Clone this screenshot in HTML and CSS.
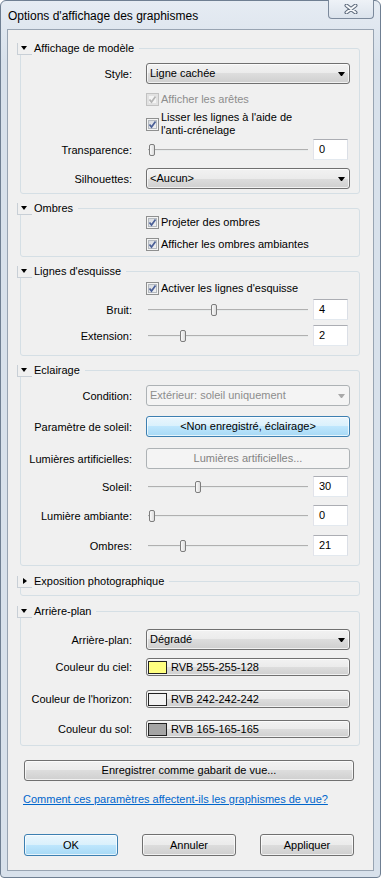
FILE: index.html
```html
<!DOCTYPE html>
<html lang="fr">
<head>
  <meta charset="UTF-8">
  <meta name="viewport" content="width=device-width, initial-scale=1.0">
  <title>Options d'affichage des graphismes</title>
  <link rel="stylesheet" href="styles.css">
</head>
<body>
  <div class="window">
    <div class="titlebar">
      <span class="title">Options d'affichage des graphismes</span>
      <span class="close">
        <svg width="14" height="10" viewBox="0 0 14 10">
          <path d="M2.5 1.5 L11.5 8.5 M11.5 1.5 L2.5 8.5" stroke="#5d6a7b" stroke-width="4" stroke-linecap="round"/>
          <path d="M2.5 1.5 L11.5 8.5 M11.5 1.5 L2.5 8.5" stroke="#f7f9fb" stroke-width="2" stroke-linecap="round"/>
        </svg>
      </span>
    </div>

    <div class="client">
      <!-- Affichage de modèle -->
      <fieldset class="group">
        <legend><span class="toggle"></span>Affichage de modèle</legend>
        <div class="row mt8">
          <label>Style:</label>
          <div class="combo">Ligne cachée</div>
        </div>
        <div class="row mt8">
          <span></span>
          <div class="check disabled"><span class="cb"><svg width="11" height="11" viewBox="0 0 11 11"><path d="M2.5 5.5 L4.5 8 L8.5 2.5"/></svg></span>Afficher les arêtes</div>
        </div>
        <div class="row mt5">
          <span></span>
          <div class="check two-lines"><span class="cb"><svg width="11" height="11" viewBox="0 0 11 11"><path d="M2.5 5.5 L4.5 8 L8.5 2.5"/></svg></span><span>Lisser les lignes à l'aide de<br>l'anti-crénelage</span></div>
        </div>
        <div class="row mt2">
          <label>Transparence:</label>
          <div class="slider-cell">
            <div class="slider"><span class="thumb" style="left: 1px"></span></div>
            <div class="num">0</div>
          </div>
        </div>
        <div class="row mt8 pb4">
          <label>Silhouettes:</label>
          <div class="combo">&lt;Aucun&gt;</div>
        </div>
      </fieldset>

      <!-- Ombres -->
      <fieldset class="group">
        <legend><span class="toggle"></span>Ombres</legend>
        <div class="row">
          <span></span>
          <div class="check"><span class="cb"><svg width="11" height="11" viewBox="0 0 11 11"><path d="M2.5 5.5 L4.5 8 L8.5 2.5"/></svg></span>Projeter des ombres</div>
        </div>
        <div class="row mt8 pb5">
          <span></span>
          <div class="check"><span class="cb"><svg width="11" height="11" viewBox="0 0 11 11"><path d="M2.5 5.5 L4.5 8 L8.5 2.5"/></svg></span>Afficher les ombres ambiantes</div>
        </div>
      </fieldset>

      <!-- Lignes d'esquisse -->
      <fieldset class="group">
        <legend><span class="toggle"></span>Lignes d'esquisse</legend>
        <div class="row mt3">
          <span></span>
          <div class="check"><span class="cb"><svg width="11" height="11" viewBox="0 0 11 11"><path d="M2.5 5.5 L4.5 8 L8.5 2.5"/></svg></span>Activer les lignes d'esquisse</div>
        </div>
        <div class="row mt4">
          <label>Bruit:</label>
          <div class="slider-cell">
            <div class="slider"><span class="thumb" style="left: 63px"></span></div>
            <div class="num">4</div>
          </div>
        </div>
        <div class="row mt5 pb9">
          <label>Extension:</label>
          <div class="slider-cell">
            <div class="slider"><span class="thumb" style="left: 32px"></span></div>
            <div class="num">2</div>
          </div>
        </div>
      </fieldset>

      <!-- Eclairage -->
      <fieldset class="group">
        <legend><span class="toggle"></span>Eclairage</legend>
        <div class="row mt8">
          <label>Condition:</label>
          <div class="combo disabled">Extérieur: soleil uniquement</div>
        </div>
        <div class="row mt10">
          <label>Paramètre de soleil:</label>
          <div class="btn blue">&lt;Non enregistré, éclairage&gt;</div>
        </div>
        <div class="row mt11">
          <label>Lumières artificielles:</label>
          <div class="btn disabled">Lumières artificielles...</div>
        </div>
        <div class="row mt7">
          <label>Soleil:</label>
          <div class="slider-cell">
            <div class="slider"><span class="thumb" style="left: 47px"></span></div>
            <div class="num">30</div>
          </div>
        </div>
        <div class="row mt8">
          <label>Lumière ambiante:</label>
          <div class="slider-cell">
            <div class="slider"><span class="thumb" style="left: 1px"></span></div>
            <div class="num">0</div>
          </div>
        </div>
        <div class="row mt9 pb9">
          <label>Ombres:</label>
          <div class="slider-cell">
            <div class="slider"><span class="thumb" style="left: 32px"></span></div>
            <div class="num">21</div>
          </div>
        </div>
      </fieldset>

      <!-- Exposition photographique -->
      <fieldset class="group collapsed">
        <legend><span class="toggle"></span>Exposition photographique</legend>
      </fieldset>

      <!-- Arrière-plan -->
      <fieldset class="group">
        <legend><span class="toggle"></span>Arrière-plan</legend>
        <div class="row mt11">
          <label>Arrière-plan:</label>
          <div class="combo">Dégradé</div>
        </div>
        <div class="row mt8">
          <label>Couleur du ciel:</label>
          <div class="btn color"><span class="swatch sky"></span>RVB 255-255-128</div>
        </div>
        <div class="row mt14">
          <label>Couleur de l'horizon:</label>
          <div class="btn color"><span class="swatch horizon"></span>RVB 242-242-242</div>
        </div>
        <div class="row mt12 pb7">
          <label>Couleur du sol:</label>
          <div class="btn color"><span class="swatch ground"></span>RVB 165-165-165</div>
        </div>
      </fieldset>

      <div class="btn wide">Enregistrer comme gabarit de vue...</div>
      <a class="help" href="#">Comment ces paramètres affectent-ils les graphismes de vue?</a>

      <div class="actions">
        <div class="btn blue">OK</div>
        <div class="btn">Annuler</div>
        <div class="btn">Appliquer</div>
      </div>
    </div>
  </div>
</body>
</html>
```

FILE: styles.css
```css
body { margin: 0; background: #fff; font-family: "Liberation Sans", Arial, sans-serif; font-size: 12px; color: #000; }

.window { width: 381px; height: 878px; box-sizing: border-box; display: flex; flex-direction: column; padding: 0 6px 6px; border: 1px solid #6f7f92; border-radius: 6px 6px 4px 4px; background: linear-gradient(#e6ecf3, #d8e1eb 60px, #d8e1eb); }
.titlebar { height: 28px; display: flex; justify-content: space-between; align-items: flex-start; }
.title { margin: 7px 0 0 1px; line-height: 16px; }
.close { width: 46px; height: 19px; box-sizing: border-box; margin-top: -1px; border: 1px solid #7c8a9c; border-top: 0; border-radius: 0 0 4px 4px; background: linear-gradient(#eef2f7, #dbe3ec); display: flex; align-items: center; justify-content: center; }

.client { flex: 1; border: 1px solid #98a4b2; background: #f0f0f0; padding-top: 11px; font-size: 11px; }

/* group boxes */
.group { margin: 0 13px 0 12px; padding: 0 9px 0 0; border: 1px solid #d5dfe5; border-radius: 3px; min-inline-size: 0; }
.group + .group { margin-top: 7px; }
.group.collapsed { padding-bottom: 7px; margin-top: 8px; }
.group.collapsed + .group { margin-top: 8px; }
.group legend { padding: 0 5px 0 0; margin-left: -4px; line-height: 14px; }
.toggle { display: inline-block; vertical-align: bottom; width: 14px; height: 11px; margin-right: 2px; border-left: 1px solid #c8cfd6; border-bottom: 1px solid #c8cfd6; }
.toggle::after { content: ""; display: block; width: 0; margin: 3px 0 0 3px; border-left: 3px solid transparent; border-right: 3px solid transparent; border-top: 4px solid #000; }
.collapsed .toggle::after { margin: 2px 0 0 5px; border: 3px solid transparent; border-right: 0; border-left: 4px solid #000; }

.row { display: grid; grid-template-columns: 111px 1fr; column-gap: 14px; align-items: center; }
.row label { text-align: right; white-space: nowrap; }
.mt2 { margin-top: 2px; } .mt3 { margin-top: 3px; } .mt4 { margin-top: 4px; } .mt5 { margin-top: 5px; }
.mt7 { margin-top: 7px; } .mt8 { margin-top: 8px; } .mt9 { margin-top: 9px; } .mt10 { margin-top: 10px; }
.mt11 { margin-top: 11px; } .mt12 { margin-top: 12px; } .mt14 { margin-top: 14px; }
.pb4 { padding-bottom: 4px; } .pb5 { padding-bottom: 5px; } .pb7 { padding-bottom: 7px; } .pb9 { padding-bottom: 9px; }

/* checkboxes */
.check { display: flex; align-items: center; gap: 2px; line-height: 14px; }
.check.two-lines { line-height: 13px; }
.cb { width: 13px; height: 13px; box-sizing: border-box; flex: none; border: 1px solid #8e8f8f; background: linear-gradient(135deg, #cfd3d9, #f8f8f8); box-shadow: inset 0 0 0 1px #f4f4f4, inset 0 0 0 2px #b5bac0; }
.cb svg { display: block; }
.cb path { fill: none; stroke: #4a5f97; stroke-width: 1.7; }
.check.disabled { color: #8d8d8d; }
.check.disabled .cb { border-color: #c2c2c2; background: #f4f4f4; box-shadow: inset 0 0 0 2px #e2e2e2; }
.check.disabled .cb path { stroke: #b4b4b4; }

/* combos and buttons */
.combo, .btn { height: 21px; box-sizing: border-box; border: 1px solid #707070; border-radius: 3px; line-height: 19px; white-space: nowrap; background: linear-gradient(#f2f2f2, #ebebeb 50%, #dddddd 50%, #cfcfcf); box-shadow: inset 0 0 0 1px rgba(255, 255, 255, 0.7); }
.combo { display: flex; justify-content: space-between; align-items: center; padding: 0 4px 0 3px; }
.combo::after { content: ""; width: 1px; height: 0; border-left: 3px solid transparent; border-right: 3px solid transparent; border-top: 4px solid #000; }
.combo.disabled { color: #8d8d8d; border-color: #adb2b5; background: #f4f4f4; box-shadow: none; }
.combo.disabled::after { border-top-color: #a8a8a8; }
.btn { text-align: center; }
.btn.blue { border-color: #3c7fb1; background: linear-gradient(#eaf6fd, #d9f0fc 50%, #bee6fd 50%, #a7d9f5); }
.btn.disabled { color: #838383; border-color: #adb2b5; background: #f4f4f4; box-shadow: none; }
.btn.color { height: 18px; display: flex; align-items: center; gap: 4px; padding-left: 1px; text-align: left; line-height: 16px; }
.swatch { width: 19px; height: 13px; box-sizing: border-box; border: 1px solid #222; }
.swatch.sky { background: #ffff80; }
.swatch.horizon { background: #f2f2f2; }
.swatch.ground { background: #a5a5a5; }

/* sliders */
.slider-cell { display: flex; align-items: center; gap: 5px; padding-right: 2px; }
.slider { flex: 1; position: relative; height: 2px; margin-left: 2px; background: #e7eaea; border-top: 1px solid #b0b0b0; box-sizing: border-box; }
.thumb { position: absolute; top: 50%; margin-top: -6px; width: 6px; height: 12px; box-sizing: border-box; border: 1px solid #7d7d7d; border-radius: 2px; background: linear-gradient(to right, #fafafa, #dcdcdc); }
.num { width: 35px; height: 21px; box-sizing: border-box; padding-left: 5px; line-height: 19px; background: #fff; border: 1px solid; border-color: #abadb3 #dbdfe6 #e3e9ef #e2e3ea; }

/* bottom area */
.btn.wide { margin: 14px 19px 0 16px; }
.help { display: block; margin: 11px 0 0 15px; line-height: 15px; color: #0066cc; }
.actions { display: flex; justify-content: space-between; margin: 27px 19px 0 16px; }
.actions .btn { width: 94px; height: 22px; line-height: 20px; }
```
